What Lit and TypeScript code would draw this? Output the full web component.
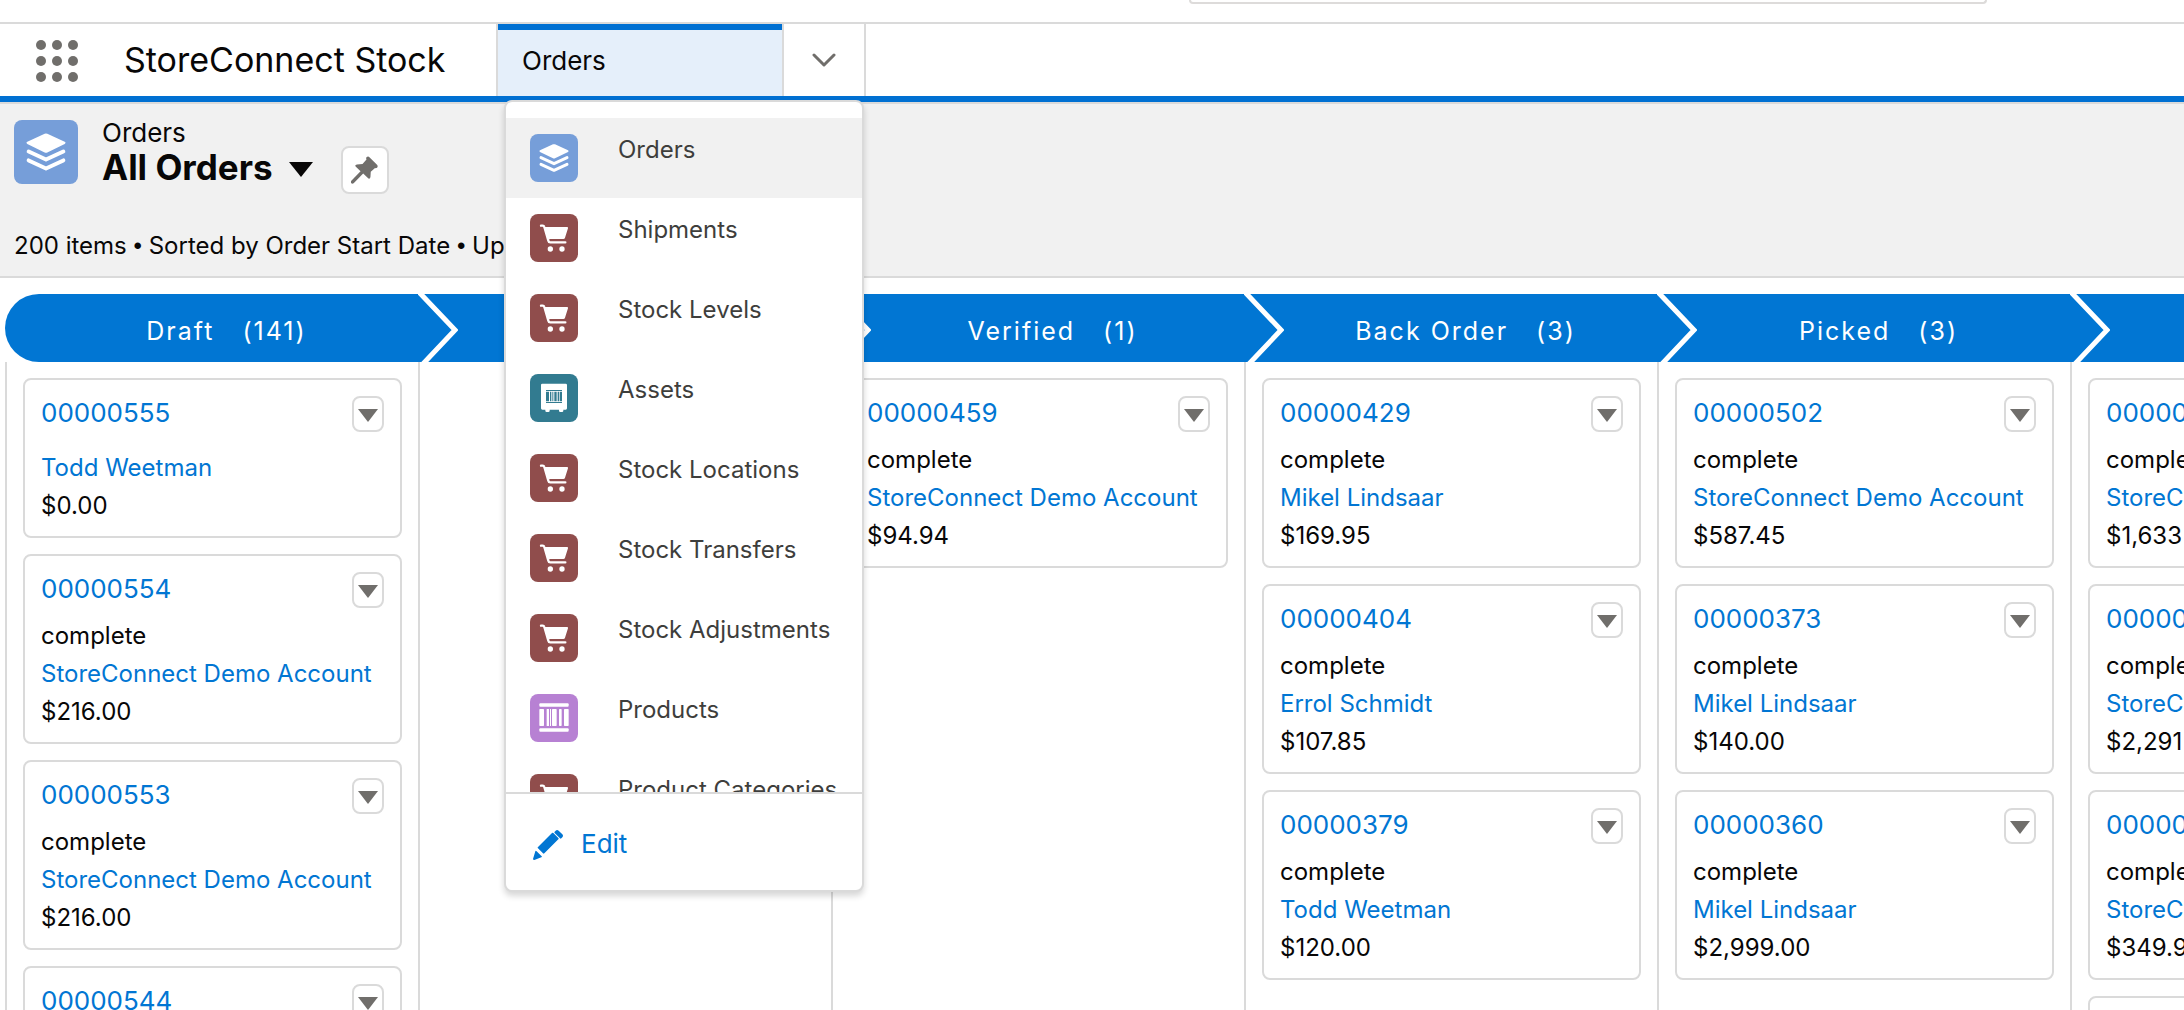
import { LitElement, html, css, svg, nothing } from "lit";
import { customElement, property, state } from "lit/decorators.js";

type IconName = "orders" | "cart" | "asset" | "product";

interface NavItem {
  label: string;
  icon: IconName;
}

interface Order {
  number: string;
  status?: string;
  account: string;
  amount: string;
}

interface Stage {
  name: string;
  count?: number;
  orders: Order[];
}

const NAV_ITEMS: NavItem[] = [
  { label: "Orders", icon: "orders" },
  { label: "Shipments", icon: "cart" },
  { label: "Stock Levels", icon: "cart" },
  { label: "Assets", icon: "asset" },
  { label: "Stock Locations", icon: "cart" },
  { label: "Stock Transfers", icon: "cart" },
  { label: "Stock Adjustments", icon: "cart" },
  { label: "Products", icon: "product" },
  { label: "Product Categories", icon: "cart" },
];

const DEMO = "StoreConnect Demo Account";

const STAGES: Stage[] = [
  {
    name: "Draft",
    count: 141,
    orders: [
      { number: "00000555", account: "Todd Weetman", amount: "$0.00" },
      { number: "00000554", status: "complete", account: DEMO, amount: "$216.00" },
      { number: "00000553", status: "complete", account: DEMO, amount: "$216.00" },
      { number: "00000544", status: "complete", account: DEMO, amount: "$216.00" },
    ],
  },
  { name: "", orders: [] },
  {
    name: "Verified",
    count: 1,
    orders: [{ number: "00000459", status: "complete", account: DEMO, amount: "$94.94" }],
  },
  {
    name: "Back Order",
    count: 3,
    orders: [
      { number: "00000429", status: "complete", account: "Mikel Lindsaar", amount: "$169.95" },
      { number: "00000404", status: "complete", account: "Errol Schmidt", amount: "$107.85" },
      { number: "00000379", status: "complete", account: "Todd Weetman", amount: "$120.00" },
    ],
  },
  {
    name: "Picked",
    count: 3,
    orders: [
      { number: "00000502", status: "complete", account: DEMO, amount: "$587.45" },
      { number: "00000373", status: "complete", account: "Mikel Lindsaar", amount: "$140.00" },
      { number: "00000360", status: "complete", account: "Mikel Lindsaar", amount: "$2,999.00" },
    ],
  },
  {
    name: "",
    orders: [
      { number: "00000", status: "complete", account: DEMO, amount: "$1,633" },
      { number: "00000", status: "complete", account: DEMO, amount: "$2,291" },
      { number: "00000", status: "complete", account: DEMO, amount: "$349.9" },
      { number: "00000", status: "complete", account: DEMO, amount: "" },
    ],
  },
];

const GLYPHS = {
  orders: svg`
    <path d="M69 31q3-1 6 0l39 18q4 2 0 5L75 73q-3 1-6 0L30 54q-4-3 0-5z" fill="#fff"/>
    <path d="M33 71l39 18 39-18M33 91l39 18 39-18" fill="none" stroke="#fff"
      stroke-width="9" stroke-linecap="round" stroke-linejoin="round"/>`,
  cart: svg`
    <path d="M33 35h5q4 0 5 4l12 41q1 5 6 5h45" fill="none" stroke="#fff"
      stroke-width="7" stroke-linecap="round" stroke-linejoin="round"/>
    <path d="M44 39h67q4 0 3 4l-9 28q-1 4-5 4H60q-3 0-4 3z" fill="#fff"/>
    <circle cx="61" cy="105" r="8" fill="#fff"/>
    <circle cx="96" cy="105" r="8" fill="#fff"/>`,
  asset: svg`
    <path d="M37 29h70q4 0 4 4v70q0 4-4 4h-7v3q0 4-4 4h-5q-4 0-4-4v-3H59v3q0 4-4 4h-5q-4 0-4-4v-3h-9q-4 0-4-4V33q0-4 4-4z" fill="#fff"/>
    <path d="M48 48h48v3H48zM48 84h48v3H48zM48 53h9v29h-9zM60 53h4v29h-4zM67 53h3v29h-3zM73 53h7v29h-7zM83 53h4v29h-4zM89 53h7v29h-7z" fill="#327b90"/>`,
  product: svg`
    <g fill="#fff">
      <rect x="28" y="28" width="88" height="10" rx="3"/>
      <rect x="28" y="103" width="88" height="10" rx="3"/>
      <rect x="28" y="45" width="14" height="51" rx="2"/>
      <rect x="50" y="45" width="7" height="51" rx="1"/>
      <rect x="60" y="45" width="3" height="51"/>
      <rect x="66" y="45" width="14" height="51" rx="2"/>
      <rect x="87" y="45" width="8" height="51" rx="2"/>
      <rect x="102" y="45" width="14" height="51" rx="2"/>
    </g>`,
};

@customElement("object-icon")
class ObjectIcon extends LitElement {
  @property() name: IconName = "orders";

  static styles = css`
    :host {
      display: block;
      flex: none;
    }
    .tile {
      display: block;
      width: 100%;
      height: 100%;
      border-radius: 8px;
    }
    .orders { background: #769ed9; }
    .cart { background: #904d4c; }
    .asset { background: #327b90; }
    .product { background: #b781d3; }
  `;

  render() {
    return html`<svg class="tile ${this.name}" viewBox="0 0 144 144" aria-hidden="true">
      ${GLYPHS[this.name]}
    </svg>`;
  }
}

@customElement("order-card")
class OrderCard extends LitElement {
  @property({ attribute: false }) order!: Order;

  static styles = css`
    .card {
      display: flex;
      flex-direction: column;
      gap: 13px;
      padding: 16px 16px 15px;
      border: 2px solid #dadada;
      border-radius: 8px;
      background: #fff;
    }
    .top {
      display: flex;
      justify-content: space-between;
      height: 36px;
    }
    a {
      color: #0176d3;
      text-decoration: none;
    }
    .number {
      font-size: 26px;
      line-height: 34px;
    }
    .more {
      display: grid;
      place-items: center;
      width: 32px;
      height: 36px;
      padding: 2px 0 0;
      border: 2px solid #dadada;
      border-radius: 8px;
      background: #fff;
    }
    .fields {
      display: flex;
      flex-direction: column;
      gap: 8px;
      margin: 0;
      padding: 0;
      list-style: none;
      font-size: 24px;
      line-height: 30px;
      white-space: nowrap;
    }
  `;

  render() {
    const { number, status, account, amount } = this.order;
    return html`<article class="card">
      <div class="top">
        <a class="number" href="#">${number}</a>
        <button class="more" aria-label="Actions for order ${number}">
          <svg width="20" height="13" viewBox="0 0 20 13" aria-hidden="true">
            <path d="M0 0h20L10 13z" fill="#706e6b" />
          </svg>
        </button>
      </div>
      <ul class="fields">
        <li>${status ?? nothing}</li>
        <li><a href="#">${account}</a></li>
        <li>${amount}</li>
      </ul>
    </article>`;
  }
}

@customElement("nav-menu")
class NavMenu extends LitElement {
  @state() private active = "Orders";

  static styles = css`
    .menu {
      box-sizing: border-box;
      width: 360px;
      border: 2px solid #dadada;
      border-radius: 8px;
      background: #fff;
      box-shadow: 0 4px 6px rgba(0, 0, 0, 0.16);
      overflow: hidden;
    }
    .list {
      height: 674px;
      margin: 0;
      padding: 16px 0 0;
      overflow: hidden;
      list-style: none;
    }
    .item {
      display: flex;
      box-sizing: border-box;
      gap: 40px;
      height: 80px;
      padding: 16px 0 16px 24px;
      color: #3e3e3c;
      font-size: 24px;
      line-height: 32px;
      text-decoration: none;
      white-space: nowrap;
    }
    .item.active { background: #f1f1f1; }
    .icon {
      width: 48px;
      height: 48px;
    }
    .footer {
      display: flex;
      padding: 32px 24px 30px;
      border-top: 2px solid #dadada;
    }
    .edit {
      display: flex;
      align-items: center;
      gap: 18px;
      height: 34px;
      padding: 0 0 0 3px;
      border: 0;
      background: none;
      color: #0176d3;
      font: inherit;
      font-size: 26px;
    }
    .pencil {
      align-self: flex-end;
    }
  `;

  render() {
    return html`<div class="menu">
      <ul class="list">
        ${NAV_ITEMS.map(
          (item) => html`<li>
            <a
              class="item ${item.label === this.active ? "active" : ""}"
              href="#"
              @click=${() => (this.active = item.label)}
            >
              <object-icon class="icon" .name=${item.icon}></object-icon>
              <span>${item.label}</span>
            </a>
          </li>`
        )}
      </ul>
      <div class="footer">
        <button class="edit">
          <svg class="pencil" width="30" height="30" viewBox="0 0 90 90" aria-hidden="true">
            <path
              d="M57 9q2-2 4 0l15 15q2 2 0 4L34 70q-2 2-4 0L15 55q-2-2 0-4zM65 5l3-3q4-4 9 0l11 11q4 4 0 9l-3 3q-2 2-4 0L65 9q-2-2 0-4zM7 64q1-3 3-1l16 16q2 2-1 3L4 90q-4 0-4-3z"
              fill="#0176d3"
            />
          </svg>
          Edit
        </button>
      </div>
    </div>`;
  }
}

@customElement("app-root")
class AppRoot extends LitElement {
  static styles = css`
    :host {
      display: flex;
      flex-direction: column;
      height: 100vh;
      overflow: hidden;
      background: #fff;
      color: #080707;
      font-family: Inter, "Liberation Sans", sans-serif;
    }
    .global {
      display: flex;
      flex: none;
      justify-content: center;
      box-sizing: border-box;
      height: 24px;
      padding-left: 992px;
      border-bottom: 2px solid #dadada;
    }
    .search {
      box-sizing: border-box;
      width: 798px;
      height: 4px;
      padding: 0;
      border: 2px solid #dddbda;
      border-top: 0;
      border-radius: 0 0 8px 8px;
    }
    .appbar {
      display: flex;
      flex: none;
      height: 72px;
      border-bottom: 6px solid #0070d2;
    }
    .launcher {
      display: grid;
      align-self: center;
      margin-left: 36px;
      padding: 2px 0 0;
      border: 0;
      background: none;
    }
    .app-name {
      align-self: center;
      width: 372px;
      margin: 0 0 0 46px;
      font-size: 34px;
      font-weight: 400;
      line-height: 44px;
      white-space: nowrap;
    }
    .tab {
      position: relative;
      display: flex;
      box-sizing: border-box;
      width: 288px;
      border: 2px solid #dadada;
      border-width: 0 2px;
    }
    .tab-link {
      flex: 1;
      padding: 0 24px;
      background: #e5effa;
      box-shadow: inset 0 6px #0070d2;
      color: #080707;
      font-size: 26px;
      line-height: 74px;
      text-decoration: none;
    }
    .menu {
      position: absolute;
      top: 76px;
      left: 6px;
      z-index: 2;
    }
    .tab-more {
      display: grid;
      place-items: center;
      width: 82px;
      padding: 0;
      border: 0;
      border-right: 2px solid #dadada;
      background: none;
    }
    .page-head {
      flex: none;
      padding: 16px 14px 14px;
      border: 2px solid #dadada;
      border-width: 2px 0;
      background: #f1f1f1;
    }
    .title-row {
      display: flex;
      align-items: flex-start;
      height: 76px;
    }
    .page-icon {
      width: 64px;
      height: 64px;
    }
    .titles {
      margin: 0 0 0 24px;
    }
    .object {
      margin: 0;
      font-size: 26px;
      line-height: 26px;
    }
    .view {
      display: flex;
      align-items: center;
      gap: 16px;
      margin: 0;
      font-size: 35px;
      line-height: 42px;
    }
    .caret {
      padding-top: 4px;
    }
    .pin {
      display: grid;
      place-items: center;
      width: 48px;
      height: 48px;
      margin: 26px 0 0 28px;
      padding: 0;
      border: 2px solid #dadada;
      border-radius: 8px;
      background: #fff;
    }
    .summary {
      margin: 34px 0 0;
      font-size: 24px;
      line-height: 32px;
      white-space: nowrap;
    }
    .bullet {
      font-family: "Liberation Sans", sans-serif;
      line-height: 1;
    }
    .board {
      display: grid;
      flex: 1;
      grid-auto-flow: column;
      grid-auto-columns: minmax(413px, 1fr);
      min-height: 0;
      padding: 16px 0 0 5px;
    }
    .stage {
      display: flex;
      flex-direction: column;
    }
    .stage-head {
      display: flex;
      flex: none;
      align-items: center;
      height: 68px;
      margin: 0;
      padding-right: 10px;
      background: #0176d3;
      color: #fff;
      font-size: 25px;
      font-weight: 400;
      letter-spacing: 2px;
    }
    .stage:first-child .stage-head {
      padding-left: 40px;
      border-radius: 34px 0 0 34px;
    }
    .stage-label {
      display: flex;
      flex: 1;
      justify-content: center;
      gap: 28px;
      padding-top: 6px;
    }
    .cards {
      display: flex;
      flex: 1;
      flex-direction: column;
      gap: 16px;
      padding: 16px;
      border-left: 2px solid #dadada;
    }
  `;

  private renderStage(stage: Stage, index: number) {
    return html`<section class="stage">
      <h2 class="stage-head">
        ${index
          ? html`<svg width="40" height="68" viewBox="0 0 40 68" aria-hidden="true">
              <path d="M-1-4L37 36 3 72" fill="none" stroke="#fff" stroke-width="5" />
            </svg>`
          : nothing}
        <span class="stage-label">
          <span>${stage.name}</span>
          ${stage.count ? html`<span>(${stage.count})</span>` : nothing}
        </span>
      </h2>
      <div class="cards">
        ${stage.orders.map((order) => html`<order-card .order=${order}></order-card>`)}
      </div>
    </section>`;
  }

  render() {
    const dots = [5, 21, 37];
    const bullet = html`<span class="bullet">•</span>`;
    return html`
      <header class="global">
        <input class="search" type="search" aria-label="Search" />
      </header>
      <nav class="appbar">
        <button class="launcher" aria-label="App launcher">
          <svg width="42" height="42" viewBox="0 0 42 42" aria-hidden="true">
            ${dots.map((y) => dots.map((x) => svg`<circle cx=${x} cy=${y} r="5" fill="#706e6b"/>`))}
          </svg>
        </button>
        <h1 class="app-name">StoreConnect Stock</h1>
        <div class="tab">
          <a class="tab-link" href="#">Orders</a>
          <nav-menu class="menu"></nav-menu>
        </div>
        <button class="tab-more" aria-label="More tabs">
          <svg width="24" height="14" viewBox="0 0 24 14" aria-hidden="true">
            <path d="M2 2l10 10L22 2" fill="none" stroke="#706e6b" stroke-width="3" stroke-linecap="round" stroke-linejoin="round" />
          </svg>
        </button>
      </nav>
      <header class="page-head">
        <div class="title-row">
          <object-icon class="page-icon" name="orders"></object-icon>
          <div class="titles">
            <p class="object">Orders</p>
            <h2 class="view">
              All Orders
              <svg class="caret" width="24" height="15" viewBox="0 0 24 15" aria-hidden="true">
                <path d="M0 0h24L12 15z" fill="#080707" />
              </svg>
            </h2>
          </div>
          <button class="pin" aria-label="Pin this list view">
            <svg width="27" height="28" viewBox="0 0 82 84" aria-hidden="true">
              <path
                d="M47 3q5-4 9 0l23 23q4 5 0 9-3 2-6 1L60 47l-1 16q-1 7-6 5L37 53 8 82q-4 3-7 0-3-3 0-7l28-29-15-15q-3-5 4-6l17-1 12-14q-2-4 0-7z"
                fill="#706e6b"
              />
            </svg>
          </button>
        </div>
        <p class="summary">200 items ${bullet} Sorted by Order Start Date ${bullet} Updated</p>
      </header>
      <main class="board">${STAGES.map((stage, i) => this.renderStage(stage, i))}</main>
    `;
  }
}
